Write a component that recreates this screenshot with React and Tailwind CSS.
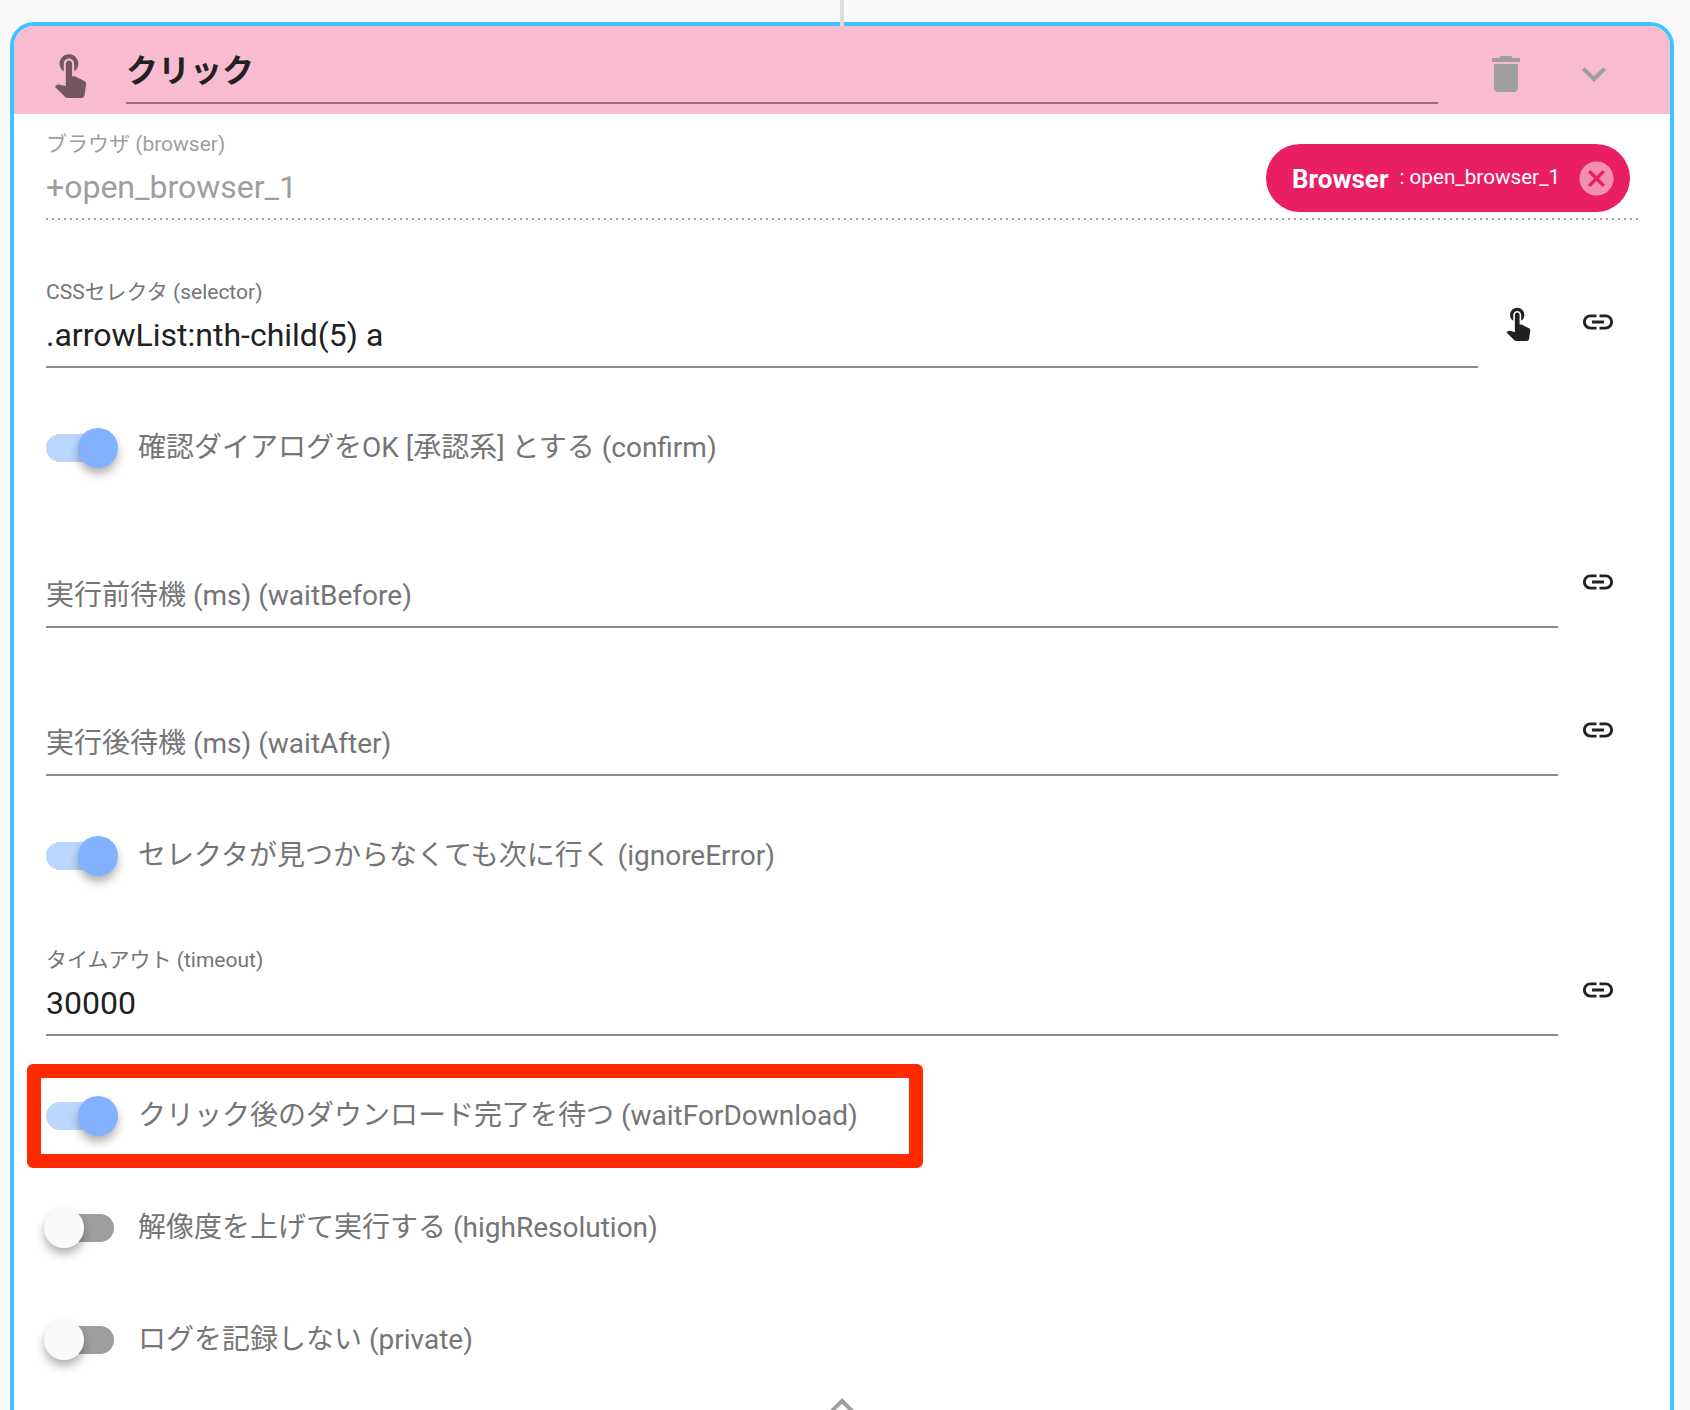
import React from 'react';

const iconPaths = {
    touch: "M9 11.24V7.5C9 6.12 10.12 5 11.5 5S14 6.12 14 7.5v3.74c1.21-.81 2-2.18 2-3.74C16 5.01 13.99 3 11.5 3S7 5.01 7 7.5c0 1.56.79 2.93 2 3.74zm9.84 4.63l-4.54-2.26c-.17-.07-.35-.11-.54-.11H13v-6c0-.83-.67-1.5-1.5-1.5S10 6.67 10 7.5v10.74l-3.43-.72c-.08-.01-.15-.03-.24-.03-.31 0-.59.13-.79.33l-.79.8 4.94 4.94c.27.27.65.44 1.06.44h6.79c.75 0 1.33-.55 1.44-1.28l.75-5.27c.01-.07.02-.14.02-.2 0-.62-.38-1.16-.91-1.38z",
    trash: "M6 19c0 1.1.9 2 2 2h8c1.1 0 2-.9 2-2V7H6v12zM19 4h-3.5l-1-1h-5l-1 1H5v2h14V4z",
    down: "M16.59 8.59L12 13.17 7.41 8.59 6 10l6 6 6-6z",
    up: "M12 8l-6 6 1.41 1.41L12 10.83l4.59 4.58L18 14z",
    link: "M3.9 12c0-1.71 1.39-3.1 3.1-3.1h4V7H7c-2.76 0-5 2.24-5 5s2.24 5 5 5h4v-1.9H7c-1.71 0-3.1-1.39-3.1-3.1zM8 13h8v-2H8v2zm9-6h-4v1.9h4c1.71 0 3.1 1.39 3.1 3.1s-1.39 3.1-3.1 3.1h-4V17h4c2.76 0 5-2.24 5-5s-2.24-5-5-5z",
    cancel: "M12 2C6.47 2 2 6.47 2 12s4.47 10 10 10 10-4.47 10-10S17.53 2 12 2zm5 13.59L15.59 17 12 13.41 8.41 17 7 15.59 10.59 12 7 8.41 8.41 7 12 10.59 15.59 7 17 8.41 13.41 12 17 15.59z",
};

const Icon = ({ name, className }) => (
    <svg viewBox="0 0 24 24" fill="currentColor" className={className}>
        <path d={iconPaths[name]} />
    </svg>
);

// Interruptor: el riel es igual en ambos estados, solo cambia el color y la perilla
const Toggle = ({ on, label, className }) => (
    <div className={`flex items-center h-[56px] ${className}`}>
        <div className={`relative w-[68px] h-[28px] rounded-full ${on ? 'bg-[#bbd6ff]' : 'bg-[#9e9e9e]'}`}>
            <div
                className={`absolute top-[-6px] w-[40px] h-[40px] rounded-full shadow-[0_6px_10px_rgba(0,0,0,0.3)] ${on ? 'left-[32px] bg-[#82b1ff]' : 'left-[-2px] bg-[#fafafa]'}`}
            />
        </div>
        <span className="ml-[24px] text-[28px] text-[#757575] whitespace-nowrap">{label}</span>
    </div>
);

const TextField = ({ label, value, placeholder, width, className, children }) => (
    <div className={`flex ${className}`}>
        <div className={`${width} h-[92px] border-b-2 border-[#8a8a8a]`}>
            <div className="pt-[2px] h-[28px] leading-[28px] text-[21px] text-[#757575] whitespace-nowrap">{label}</div>
            <div className={`h-[44px] leading-[44px] whitespace-nowrap ${value ? 'mt-[9px] text-[32px] text-[#212121]' : 'mt-[10px] text-[28px] text-[#757575]'}`}>
                {value || placeholder}
            </div>
        </div>
        {children}
    </div>
);

const LinkIcon = ({ className }) => (
    <Icon name="link" className={`w-[36px] h-[36px] mt-[28px] text-[#212121] ${className}`} />
);

export default function App() {
    return (
        <div
            className="h-[1410px] overflow-hidden bg-[#fafafa]"
            style={{ fontFamily: 'Roboto, "Noto Sans CJK JP", sans-serif' }}
        >
            {/* Conector entre tarjetas, pasa por encima del borde */}
            <div className="relative z-10 ml-[840px] mb-[-4px] w-[4px] h-[26px] bg-[#dcdcdc]" />

            <div className="ml-[10px] w-[1664px] h-[1500px] bg-white border-4 border-[#40c4ff] rounded-[24px] overflow-hidden">
                {/* Cabecera */}
                <div className="flex h-[88px] bg-[#f8bbd0]">
                    <Icon name="touch" className="w-[50px] h-[50px] ml-[31px] mt-[22px] shrink-0 text-[#74565e]" />
                    <div className="ml-[31px] w-[1312px] h-[78px] border-b-2 border-[#9a6a78] text-[32px] leading-[90px] font-bold text-[#212121]">
                        クリック
                    </div>
                    <Icon name="trash" className="w-[48px] h-[48px] ml-[44px] mt-[24px] text-[#9e9e9e]" />
                    <Icon name="down" className="w-[48px] h-[48px] ml-[40px] mt-[24px] text-[#9e9e9e]" />
                </div>

                <div className="pl-[32px]">
                    {/* Navegador */}
                    <div className="w-[1592px] h-[106px]">
                        <div className="flex justify-between h-[104px]">
                            <div className="pt-[16px] text-[#9e9e9e] whitespace-nowrap">
                                <div className="h-[28px] leading-[28px] text-[21px]">ブラウザ (browser)</div>
                                <div className="mt-[7px] h-[44px] leading-[44px] text-[32px]">+open_browser_1</div>
                            </div>
                            <div className="flex items-center mt-[30px] mr-[8px] pl-[26px] pr-[13px] w-[364px] h-[68px] rounded-full bg-[#e91e63] text-white whitespace-nowrap">
                                <span className="pt-[2px] text-[26px] font-bold">Browser</span>
                                <span className="ml-[11px] text-[20.7px]">: open_browser_1</span>
                                <Icon name="cancel" className="w-[41px] h-[41px] ml-auto text-[#f48fb1]" />
                            </div>
                        </div>
                        {/* Línea punteada del campo deshabilitado */}
                        <div className="h-[2px] bg-[linear-gradient(to_right,#9e9e9e_2px,transparent_2px)] bg-[length:6px_2px]" />
                    </div>

                    <TextField
                        label="CSSセレクタ (selector)"
                        value=".arrowList:nth-child(5) a"
                        width="w-[1432px]"
                        className="mt-[56px]"
                    >
                        <Icon name="touch" className="w-[38px] h-[38px] ml-[21px] mt-[27px] text-[#212121]" />
                        <LinkIcon className="ml-[43px]" />
                    </TextField>

                    <Toggle on label="確認ダイアログをOK [承認系] とする (confirm)" className="mt-[52px]" />

                    <TextField placeholder="実行前待機 (ms) (waitBefore)" width="w-[1512px]" className="mt-[60px]">
                        <LinkIcon className="ml-[22px]" />
                    </TextField>

                    <TextField placeholder="実行後待機 (ms) (waitAfter)" width="w-[1512px]" className="mt-[56px]">
                        <LinkIcon className="ml-[22px]" />
                    </TextField>

                    <Toggle on label="セレクタが見つからなくても次に行く (ignoreError)" className="mt-[52px]" />

                    <TextField label="タイムアウト (timeout)" value="30000" width="w-[1512px]" className="mt-[60px]">
                        <LinkIcon className="ml-[22px]" />
                    </TextField>

                    <div className="relative mt-[52px]">
                        <Toggle on label="クリック後のダウンロード完了を待つ (waitForDownload)" />
                        {/* Recuadro rojo de la anotación */}
                        <div className="absolute left-[-19px] top-[-24px] w-[896px] h-[104px] border-[14px] border-[#ff2a00] rounded-[6px]" />
                    </div>

                    <Toggle label="解像度を上げて実行する (highResolution)" className="mt-[56px]" />
                    <Toggle label="ログを記録しない (private)" className="mt-[56px]" />

                    <div className="flex justify-center w-[1592px] mt-[14px]">
                        <Icon name="up" className="w-[48px] h-[48px] text-[#9e9e9e]" />
                    </div>
                </div>
            </div>
        </div>
    );
}
